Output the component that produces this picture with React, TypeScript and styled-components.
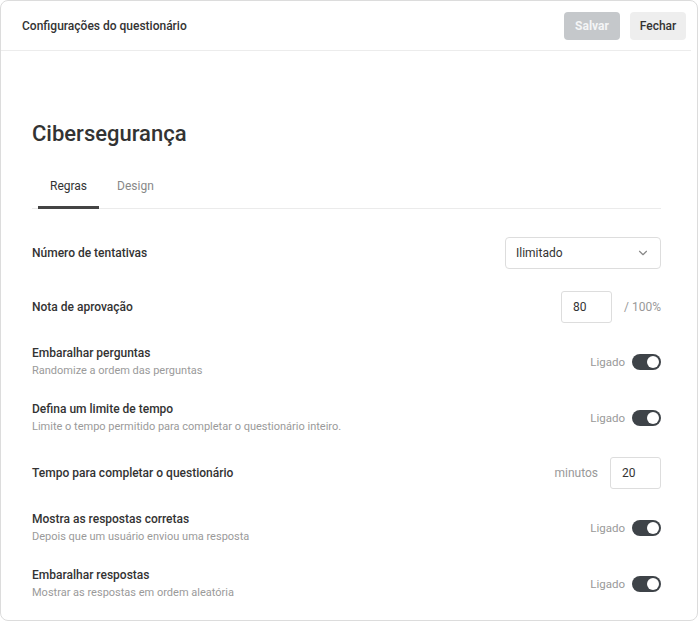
import React, { useState } from "react";
import styled, { createGlobalStyle } from "styled-components";
import { ChevronDown } from "lucide-react";

const GlobalStyle = createGlobalStyle`
  html, body {
    margin: 0;
    padding: 0;
    background: #ffffff;
  }
  * {
    box-sizing: border-box;
  }
`;

const Card = styled.div`
  width: 698px;
  height: 621px;
  border: 1px solid #dcdcdc;
  border-radius: 8px;
  background: #ffffff;
  font-family: Roboto, "Liberation Sans", sans-serif;
  color: #333333;
  overflow: hidden;
  display: flex;
  flex-direction: column;
`;

const Header = styled.div`
  height: 50px;
  flex-shrink: 0;
  margin-right: 6px;
  padding: 0 5px 0 21px;
  display: flex;
  align-items: center;
  justify-content: space-between;
  border-bottom: 1px solid #ececec;
`;

const HeaderTitle = styled.span`
  font-size: 12px;
  font-weight: 500;
  color: #333333;
`;

const HeaderActions = styled.div`
  display: flex;
  gap: 10px;
`;

interface ButtonProps {
  $variant: "primary" | "secondary";
}

const Button = styled.button<ButtonProps>`
  height: 28px;
  width: 56px;
  border: none;
  border-radius: 4px;
  font-family: Roboto, "Liberation Sans", sans-serif;
  font-size: 12px;
  font-weight: ${props => props.$variant === "primary" ? 700 : 500};
  background: ${props => props.$variant === "primary" ? "#c5c8cb" : "#eeeeee"};
  color: ${props => props.$variant === "primary" ? "#f4f5f6" : "#333333"};
  cursor: pointer;
`;

const Content = styled.div`
  padding: 69px 36px 0 31px;
`;

const Title = styled.h1`
  margin: 0;
  font-size: 22px;
  line-height: 28px;
  font-weight: 500;
  color: #333333;
`;

const TabList = styled.div`
  margin-top: 18px;
  display: flex;
  border-bottom: 1px solid #ebebeb;
`;

interface TabProps {
  $active: boolean;
}

const Tab = styled.div<TabProps>`
  margin-left: 6px;
  padding: 12px 12px 12px;
  font-size: 12px;
  line-height: 16px;
  color: ${props => props.$active ? "#333333" : "#888888"};
  border-bottom: 3px solid ${props => props.$active ? "#444444" : "transparent"};
  margin-bottom: -1px;
  cursor: pointer;
`;

const Rows = styled.div`
  margin-top: 27px;
  display: flex;
  flex-direction: column;
  gap: 20px;
`;

const Row = styled.div`
  display: flex;
  align-items: center;
  justify-content: space-between;
  min-height: 34px;
`;

const RowText = styled.div`
  display: flex;
  flex-direction: column;
`;

const Label = styled.span`
  font-size: 12px;
  line-height: 18px;
  font-weight: 500;
  color: #333333;
`;

const Hint = styled.span`
  font-size: 11px;
  line-height: 18px;
  color: #9a9a9a;
`;

const Control = styled.div<{ $gap?: number }>`
  display: flex;
  align-items: center;
  gap: ${props => props.$gap ?? 12}px;
`;

const Select = styled.div`
  width: 156px;
  height: 32px;
  border: 1px solid #dddddd;
  border-radius: 4px;
  padding: 0 10px 0 10px;
  display: flex;
  align-items: center;
  justify-content: space-between;
  font-size: 12px;
  color: #333333;
`;

const NumberInput = styled.input`
  width: 51px;
  height: 32px;
  border: 1px solid #dddddd;
  border-radius: 3px;
  padding: 0 11px;
  font-family: Roboto, "Liberation Sans", sans-serif;
  font-size: 12px;
  color: #333333;
  outline: none;
`;

const Muted = styled.span<{ $size?: number }>`
  font-size: ${props => props.$size ?? 12}px;
  color: #999999;
`;

const SwitchTrack = styled.button<{ $on: boolean }>`
  position: relative;
  width: 29px;
  height: 16px;
  border: none;
  padding: 0;
  border-radius: 8px;
  background: ${props => props.$on ? "#3e4348" : "#cccccc"};
  cursor: pointer;
`;

const SwitchKnob = styled.span<{ $on: boolean }>`
  position: absolute;
  top: 2px;
  left: ${props => props.$on ? "15px" : "2px"};
  width: 12px;
  height: 12px;
  border-radius: 50%;
  background: #ffffff;
`;

const Toggle: React.FC<{ defaultOn?: boolean }> = ({ defaultOn = true }) => {
  const [on, setOn] = useState(defaultOn);
  return (
    <Control $gap={7}>
      <Muted $size={11.5}>{on ? "Ligado" : "Desligado"}</Muted>
      <SwitchTrack $on={on} onClick={() => setOn(!on)}>
        <SwitchKnob $on={on} />
      </SwitchTrack>
    </Control>
  );
};

const App: React.FC = () => {
  const [tab, setTab] = useState("regras");

  return (
    <>
      <GlobalStyle />
      <Card>
        <Header>
          <HeaderTitle>Configurações do questionário</HeaderTitle>
          <HeaderActions>
            <Button $variant="primary">Salvar</Button>
            <Button $variant="secondary">Fechar</Button>
          </HeaderActions>
        </Header>
        <Content>
          <Title>Cibersegurança</Title>
          <TabList>
            <Tab $active={tab === "regras"} onClick={() => setTab("regras")}>Regras</Tab>
            <Tab $active={tab === "design"} onClick={() => setTab("design")}>Design</Tab>
          </TabList>
          <Rows>
            <Row>
              <Label>Número de tentativas</Label>
              <Select>
                <span>Ilimitado</span>
                <ChevronDown size={14} color="#888888" />
              </Select>
            </Row>
            <Row>
              <Label>Nota de aprovação</Label>
              <Control>
                <NumberInput defaultValue="80" />
                <Muted>/ 100%</Muted>
              </Control>
            </Row>
            <Row>
              <RowText>
                <Label>Embaralhar perguntas</Label>
                <Hint>Randomize a ordem das perguntas</Hint>
              </RowText>
              <Toggle />
            </Row>
            <Row>
              <RowText>
                <Label>Defina um limite de tempo</Label>
                <Hint>Limite o tempo permitido para completar o questionário inteiro.</Hint>
              </RowText>
              <Toggle />
            </Row>
            <Row>
              <Label>Tempo para completar o questionário</Label>
              <Control>
                <Muted>minutos</Muted>
                <NumberInput defaultValue="20" />
              </Control>
            </Row>
            <Row>
              <RowText>
                <Label>Mostra as respostas corretas</Label>
                <Hint>Depois que um usuário enviou uma resposta</Hint>
              </RowText>
              <Toggle />
            </Row>
            <Row>
              <RowText>
                <Label>Embaralhar respostas</Label>
                <Hint>Mostrar as respostas em ordem aleatória</Hint>
              </RowText>
              <Toggle />
            </Row>
          </Rows>
        </Content>
      </Card>
    </>
  );
};

export default App;
